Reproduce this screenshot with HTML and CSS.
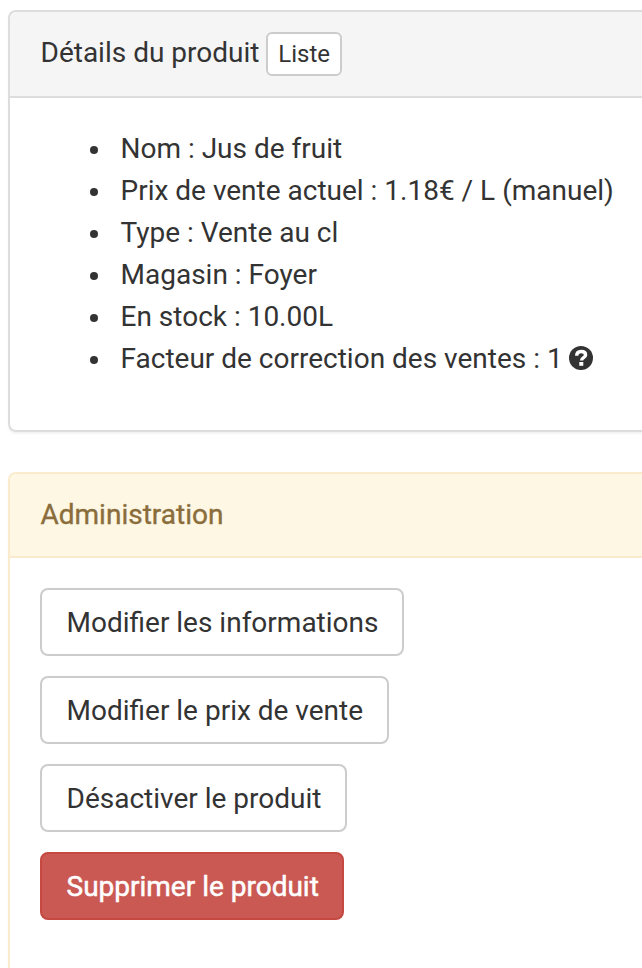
FILE: index.html
```html
<!DOCTYPE html>
<html lang="fr">
<head>
<meta charset="utf-8">
<title>Détails du produit</title>
<link rel="stylesheet" href="styles.css">
</head>
<body>
<section class="panel panel-default">
  <header class="panel-heading">Détails du produit <a class="btn btn-small">Liste</a></header>
  <div class="panel-body">
    <ul class="details">
      <li>Nom : Jus de fruit</li>
      <li>Prix de vente actuel : 1.18€ / L (manuel)</li>
      <li>Type : Vente au cl</li>
      <li>Magasin : Foyer</li>
      <li>En stock : 10.00L</li>
      <li>Facteur de correction des ventes : 1 <svg class="help" viewBox="0 0 24 24"><circle cx="12" cy="12" r="12" fill="#333"/><path d="M7.700 9.800C7.700 6.800 9.300 5.500 12.100 5.500c2.800 0 4.500 1.300 4.500 3.400 0 2.900-4 2.700-4 5.500" fill="none" stroke="#fff" stroke-width="3.400"/><path d="M10.300 16h4v3.800h-4z" fill="#fff"/></svg></li>
    </ul>
  </div>
</section>
<section class="panel panel-warning">
  <header class="panel-heading">Administration</header>
  <div class="panel-body actions">
    <a class="btn">Modifier les informations</a>
    <a class="btn">Modifier le prix de vente</a>
    <a class="btn">Désactiver le produit</a>
    <a class="btn btn-danger">Supprimer le produit</a>
  </div>
</section>
</body>
</html>
```

FILE: styles.css
```css
* { box-sizing: border-box; }
body {
  display: flex;
  flex-direction: column;
  gap: 40px;
  height: 968px;
  margin: 0;
  padding: 10px 0 0 8px;
  overflow: hidden;
  background: #fff;
  color: #333;
  font: 28px/40px Roboto, sans-serif;
}
.panel {
  border: 2px solid #ddd;
  border-right: 0;
  border-radius: 8px 0 0 8px;
  box-shadow: 0 2px 2px rgba(0, 0, 0, .05);
}
.panel-heading {
  height: 86px;
  padding: 20px 30.5px;
  border-bottom: 2px solid #ddd;
  border-radius: 6px 0 0 0;
  background: #f5f5f5;
}
.panel-body { padding: 30px; }
.details {
  margin: 0 -30px 20px 0;
  padding-left: 72.5px;
  line-height: 42px;
}
.details li { padding-left: 8px; }
.details li::marker { font-size: 26px; }
.help { width: 24px; height: 24px; margin-left: -.5px; vertical-align: -2px; }
.btn {
  display: inline-block;
  height: 68px;
  padding: 13px 23.5px 11px 24.5px;
  border: 2px solid #ccc;
  border-radius: 8px;
  background: #fff;
  white-space: nowrap;
}
.btn-small {
  height: 44px;
  padding: 0 10px;
  border-radius: 6px;
  font-size: 24px;
}
.panel-warning {
  flex: 1;
  border-color: #faebcc;
  border-bottom: 0;
  border-radius: 8px 0 0 0;
}
.panel-warning .panel-heading {
  height: 84px;
  padding-top: 21px;
  border-color: #faebcc;
  background: #fdf7e4;
  color: #8a6d3b;
  -webkit-text-stroke: .35px;
}
.actions {
  display: flex;
  flex-direction: column;
  align-items: flex-start;
  gap: 20px;
}
.btn-danger {
  background: #ca5954;
  border-color: #c54841;
  color: #fff;
  -webkit-text-stroke: .5px;
}
```
